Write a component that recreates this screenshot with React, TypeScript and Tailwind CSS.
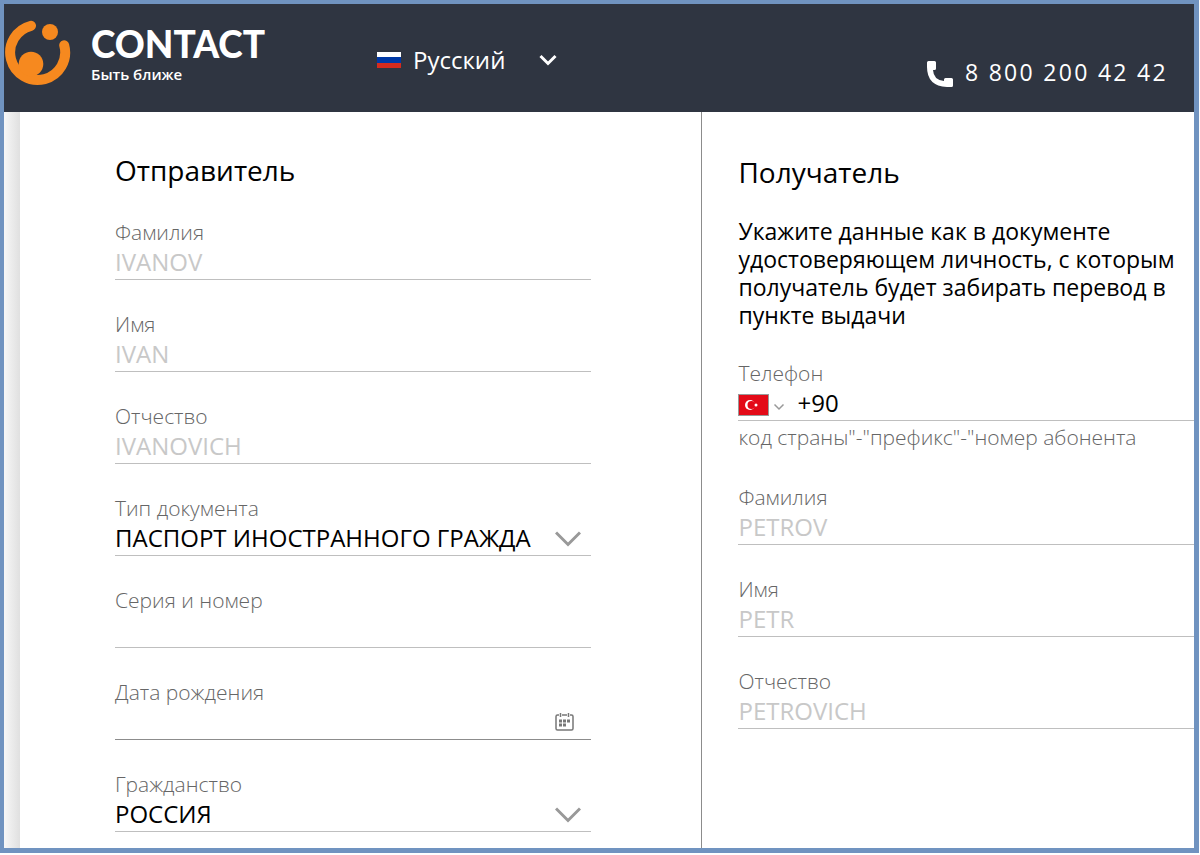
import React, { useState } from 'react';

const Logo = () => (
  <svg width="66" height="66" viewBox="0 0 66 66" fill="none" aria-hidden="true">
    <path d="M26 5.800 A27.500 27.500 0 1 0 59.200 25.300" stroke="#f6891f" strokeWidth="10" strokeLinecap="round" />
    <circle cx="45" cy="12" r="8" fill="#f6891f" />
    <circle cx="26" cy="44" r="12.300" fill="#f6891f" />
  </svg>
);

const RussianFlag = () => (
  <svg width="24" height="16" viewBox="0 0 24 16" aria-hidden="true">
    <rect width="24" height="16" fill="#fff" />
    <rect y="5" width="24" height="6" fill="#0039a6" />
    <rect y="11" width="24" height="5" fill="#d52b1e" />
  </svg>
);

const TurkishFlag = () => (
  <svg width="31" height="22" viewBox="0 0 31 22" aria-hidden="true">
    <rect x="0.5" y="0.5" width="30" height="21" fill="#e30a17" stroke="#999" />
    <circle cx="12" cy="11" r="5" fill="#fff" />
    <circle cx="13.5" cy="11" r="4" fill="#e30a17" />
    <circle cx="18" cy="11" r="1.500" fill="#fff" />
  </svg>
);

const PhoneIcon = () => (
  <svg width="26" height="26" viewBox="0 0 26 26" fill="#fff" className="mt-1" aria-hidden="true">
    <path d="M0 1.500Q0 0 1.500 0H7.500Q9 0 9 1.500V7.500Q9 9 7.500 9H6Q6.500 19 17 20V18.500Q17 17 18.500 17H24.500Q26 17 26 18.500V24.500Q26 26 24.500 26H20Q0 25 0 6z" />
  </svg>
);

const CalendarIcon = () => (
  <svg width="20" height="20" viewBox="0 0 20 20" fill="none" stroke="#777" aria-hidden="true">
    <path d="M4 3H2.500Q1 3 1 4.500V16.500Q1 18 2.500 18H16.500Q18 18 18 16.500V4.500Q18 3 16.500 3H15" strokeWidth="1.500" />
    <path d="M7 3h5M5.500 1v4M13.500 1v4" strokeWidth="1.500" />
    <path d="M4 9h11" strokeWidth="3" strokeDasharray="3 1" />
    <path d="M4 13h7" strokeWidth="3" strokeDasharray="3 1" />
  </svg>
);

const Chevron = ({ className }: { className: string }) => (
  <svg viewBox="0 0 26 16" fill="none" stroke="currentColor" className={className} aria-hidden="true">
    <path d="M1 1.500l12 12 12-12" strokeWidth="3" />
  </svg>
);

interface FieldProps {
  id: string;
  label: string;
  children: React.ReactNode;
  dark?: boolean;
  hint?: string;
}

const Field = ({ id, label, children, dark, hint }: FieldProps) => (
  <div>
    <label htmlFor={id} className="block h-7 text-[21px] leading-6 font-light text-[#666]">{label}</label>
    <div className={dark ? 'relative flex h-8 items-start border-b border-[#8c8c8c]' : 'relative flex h-8 items-start border-b border-[#bfbfbf]'}>
      {children}
    </div>
    {hint && <p className="pt-1 pb-1 text-[21px] leading-6 font-light text-[#666]">{hint}</p>}
  </div>
);

const inputClass = 'h-7 w-full min-w-0 bg-transparent text-[24px] leading-7 text-black outline-none placeholder:text-[#c8c8c8]';

const TextField = ({ id, label, placeholder }: { id: string; label: string; placeholder?: string }) => (
  <Field id={id} label={label}>
    <input id={id} type="text" placeholder={placeholder} className={inputClass} />
  </Field>
);

const SelectField = ({ id, label, option }: { id: string; label: string; option: string }) => (
  <Field id={id} label={label}>
    <select id={id} className="h-7 w-full appearance-none bg-transparent text-[24px] leading-7 text-black outline-none">
      <option>{option}</option>
    </select>
    <Chevron className="pointer-events-none absolute top-[7px] right-[10px] w-[26px] text-[#999]" />
  </Field>
);

const App = () => {
  const [phone, setPhone] = useState('+90');

  return (
    <div className="flex min-h-screen flex-col bg-white pr-px pb-[3px] font-['Open_Sans','Noto_Sans',sans-serif] text-black">
      <div className="flex grow flex-col border-4 border-r-[5px] border-b-[5px] border-[#7093c0]">
        <header className="flex h-[108px] items-start justify-between bg-[#2f3541] pr-[26px] pl-px">
          <div className="flex items-start">
            <a href="#" className="flex gap-5 pt-4 text-white">
              <Logo />
              <span className="flex flex-col pt-1">
                <span className="font-['Lato','Open_Sans',sans-serif] text-[37px] leading-10 font-black">CONTACT</span>
                <span className="text-[15px] leading-5 font-semibold">Быть ближе</span>
              </span>
            </a>
            <div className="relative ml-28 flex items-center gap-3 pt-9">
              <RussianFlag />
              <select aria-label="Язык" className="h-10 w-36 appearance-none bg-transparent text-[24px] font-medium text-white outline-none">
                <option>Русский</option>
              </select>
              <svg width="18" height="12" viewBox="0 0 18 12" fill="none" stroke="#fff" strokeWidth="3" className="pointer-events-none absolute right-0" aria-hidden="true">
                <path d="M1.500 2l7.500 7.500L16.500 2" />
              </svg>
            </div>
          </div>
          <a href="tel:88002004242" className="flex items-center gap-3 pt-12 text-[23px] leading-10 font-medium tracking-widest text-white">
            <PhoneIcon />
            8 800 200 42 42
          </a>
        </header>

        <main className="grid grow grid-cols-[27fr_19fr]">
          <section className="flex border-r border-[#8c8c8c]">
            <div className="w-4 shrink-0 bg-linear-to-r from-[#f7f7f7] to-[#e0e0e0]" />
            <div className="grow pt-10 pr-[110px] pb-4 pl-[95px]">
              <h1 className="text-[28px] leading-9">Отправитель</h1>
              <form className="flex flex-col gap-8 pt-8">
                <TextField id="sender-surname" label="Фамилия" placeholder="IVANOV" />
                <TextField id="sender-name" label="Имя" placeholder="IVAN" />
                <TextField id="sender-patronymic" label="Отчество" placeholder="IVANOVICH" />
                <SelectField id="doc-type" label="Тип документа" option="ПАСПОРТ ИНОСТРАННОГО ГРАЖДА" />
                <TextField id="doc-number" label="Серия и номер" />
                <Field id="birth-date" label="Дата рождения" dark>
                  <input id="birth-date" type="text" className={inputClass} />
                  <button type="button" aria-label="Календарь" className="absolute top-1 right-4">
                    <CalendarIcon />
                  </button>
                </Field>
                <SelectField id="citizenship" label="Гражданство" option="РОССИЯ" />
              </form>
            </div>
          </section>

          <section className="pt-10 pl-9">
            <h1 className="text-[28px] leading-10">Получатель</h1>
            <p className="pt-[25px] pr-2 text-[23px] leading-7">
              Укажите данные как в документе удостоверяющем личность, с которым получатель будет забирать перевод в пункте выдачи
            </p>
            <form className="flex flex-col gap-8 pt-8">
              <Field id="phone" label="Телефон" hint={'код страны"-"префикс"-"номер абонента'}>
                <button type="button" aria-label="Код страны" className="mr-3 flex h-8 shrink-0 items-center gap-1">
                  <TurkishFlag />
                  <svg width="12" height="8" viewBox="0 0 12 8" fill="none" stroke="#999" strokeWidth="1.500" className="mt-1" aria-hidden="true">
                    <path d="M1.500 1.500l4.500 4.500 4.500-4.500" />
                  </svg>
                </button>
                <input id="phone" type="tel" value={phone} onChange={(e) => setPhone(e.target.value)} className={inputClass} />
              </Field>
              <TextField id="recipient-surname" label="Фамилия" placeholder="PETROV" />
              <TextField id="recipient-name" label="Имя" placeholder="PETR" />
              <TextField id="recipient-patronymic" label="Отчество" placeholder="PETROVICH" />
            </form>
          </section>
        </main>
      </div>
    </div>
  );
};

export default App;
